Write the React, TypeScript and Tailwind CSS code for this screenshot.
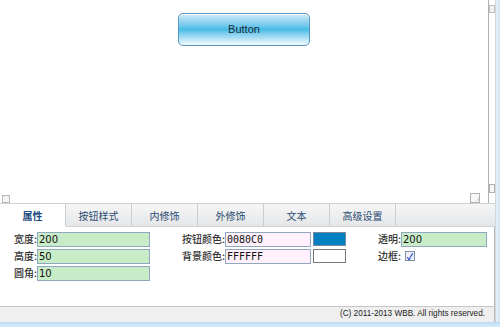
const tabs = ['属性', '按钮样式', '内修饰', '外修饰', '文本', '高级设置'];

const Field = ({ label, value, w, bg, mono }: { label: string; value: string; w: string; bg: string; mono?: boolean }) => (
  <div className="flex items-center h-[14px]">
    <span className="text-[10px] text-[#333] font-medium leading-none">{label}:</span>
    <div
      className={`${w} ${bg} h-[15px] border border-[#8fa8c0] text-[10px] leading-[13px] pl-[1px] text-[#111] ${
        mono ? "font-['DejaVu_Sans_Mono',monospace] text-[9px]" : "font-['DejaVu_Sans',sans-serif]"
      }`}
    >
      {value}
    </div>
  </div>
);

export default function App() {
  return (
    <div className="w-[500px] h-[327px] overflow-hidden bg-white font-['Noto_Sans_CJK_SC','Liberation_Sans',sans-serif]">
      <div className="flex flex-col w-[500px] h-[327px]">
        <div className="flex flex-1">
          <div className="flex flex-col w-[495px]">
            {/* canvas */}
            <div className="flex h-[203px]">
              <div className="flex-1 flex flex-col">
                <div className="flex-1 flex justify-center pt-[13px]">
                  <div className="w-[132px] h-[33px] rounded-[5px] border border-[#5b93c4] bg-gradient-to-b from-[#cfeaf8] via-[#45bde6] to-[#f2fbff] flex items-center justify-center text-[11px] text-[#1d2b3a] font-['Liberation_Sans',sans-serif] shadow-[inset_0_1px_0_#ffffff]">
                    Button
                  </div>
                </div>
                <div className="flex h-[10px] items-end justify-between pl-[2px] pr-[8px]">
                  <div className="w-[8px] h-[8px] border border-[#b8b8b8] bg-[#f4f4f4]" />
                  <div className="w-[10px] h-[10px] border border-[#b0b0b0] bg-[#f6f6f6] flex items-end justify-end text-[6px] leading-none text-[#999]">⁄</div>
                </div>
              </div>
              <div className="w-[7px] flex flex-col justify-between border-l border-[#b0b0b0] pb-[10px]">
                <div className="w-[6px] h-[8px] border border-[#c0c0c0] bg-[#f2f2f2] mt-[5px]" />
                <div className="w-[6px] h-[9px] border border-[#b0b0b0] bg-[#f6f6f6]" />
              </div>
            </div>
            {/* tabs */}
            <div className="flex h-[24px] border-t border-[#c7c7c7] bg-gradient-to-b from-[#f6f6f6] to-[#e4e6e8] border-b border-[#cfd3d6]">
              {tabs.map((t, i) => (
                <div
                  key={t}
                  className={`w-[66px] flex items-center justify-center text-[10px] border-r border-[#c9cdd1] ${
                    i === 0 ? 'bg-white text-[#1b4a80] font-bold border-b border-b-white -mb-[1px]' : 'text-[#2a4a70]'
                  }`}
                >
                  {t}
                </div>
              ))}
            </div>
            {/* form */}
            <div className="flex-1 flex bg-white pt-[5px] border-r border-[#b8b8b8]">
              <div className="flex flex-col items-end gap-[3px] w-[150px]">
                <Field label="宽度" value="200" w="w-[113px]" bg="bg-[#c8ecc8]" />
                <Field label="高度" value="50" w="w-[113px]" bg="bg-[#c8ecc8]" />
                <Field label="圆角" value="10" w="w-[113px]" bg="bg-[#c8ecc8]" />
              </div>
              <div className="flex flex-col items-end gap-[3px] w-[196px]">
                <div className="flex items-center gap-[2px]">
                  <Field label="按钮颜色" value="0080C0" w="w-[86px]" bg="bg-[#fff0fb]" mono />
                  <div className="w-[33px] h-[14px] border border-[#7a8a9a] bg-[#0080c0]" />
                </div>
                <div className="flex items-center gap-[2px]">
                  <Field label="背景颜色" value="FFFFFF" w="w-[86px]" bg="bg-[#fff0fb]" mono />
                  <div className="w-[33px] h-[14px] border border-[#777] bg-white" />
                </div>
              </div>
              <div className="flex flex-col gap-[3px] pl-[32px]">
                <Field label="透明" value="200" w="w-[86px]" bg="bg-[#c8ecc8]" />
                <div className="flex items-center h-[14px]">
                  <span className="text-[10px] text-[#333] font-medium leading-none">边框:</span>
                  <div className="ml-[4px] w-[10px] h-[10px] border border-[#8090a8] bg-[#eef2f8] flex items-center justify-center text-[9px] leading-none text-[#2040c0] font-bold">✓</div>
                </div>
              </div>
            </div>
            {/* footer */}
            <div className="h-[16px] bg-[#efefef] border-t border-[#c6c6c6] border-r border-r-[#b8b8b8] flex items-center justify-end pr-[9px] text-[8.2px] text-[#222] font-['Liberation_Sans',sans-serif]">
              (C) 2011-2013 WBB. All rights reserved.
            </div>
          </div>
          <div className="flex-1 bg-gradient-to-r from-[#e8f2fa] to-[#cfe4f4] border-l border-[#d0d8e0]" />
        </div>
        <div className="h-[5px] bg-gradient-to-b from-[#bcdcf4] to-[#d8ecfa]" />
      </div>
    </div>
  );
}
